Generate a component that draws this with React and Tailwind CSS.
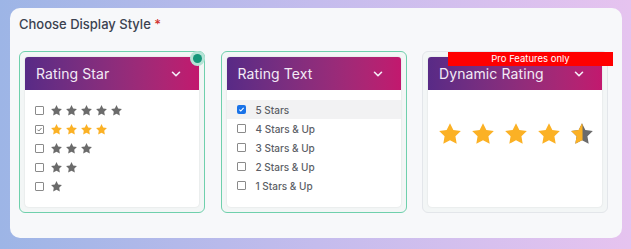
import { ChevronDown } from 'lucide-react'

const STAR = 'M12 2l3.09 6.26L22 9.27l-5 4.87 1.18 6.88L12 17.77l-6.18 3.25L7 14.14 2 9.27l6.91-1.01L12 2z'

function Star({ size = 12, color = '#6b6b6b', half = false, id }) {
  if (half) {
    return (
      <svg width={size} height={size} viewBox="0 0 24 24">
        <defs>
          <clipPath id={id}>
            <rect x="0" y="0" width="12.5" height="24" />
          </clipPath>
        </defs>
        <path d={STAR} fill="#6b6b6b" />
        <path d={STAR} fill="#fbb125" clipPath={`url(#${id})`} />
      </svg>
    )
  }
  return (
    <svg width={size} height={size} viewBox="0 0 24 24">
      <path d={STAR} fill={color} />
    </svg>
  )
}

function Box({ checked, blue }) {
  if (checked && blue) {
    return (
      <span className="w-[9px] h-[9px] rounded-[2px] bg-[#1a73e8] flex items-center justify-center">
        <svg width="7" height="7" viewBox="0 0 10 10">
          <path d="M2 5.2l2 2 4-4.4" stroke="white" strokeWidth="1.6" fill="none" />
        </svg>
      </span>
    )
  }
  return (
    <span className="w-[9px] h-[9px] rounded-[1px] border border-[#8a8a8a] bg-white flex items-center justify-center">
      {checked && (
        <svg width="7" height="7" viewBox="0 0 10 10">
          <path d="M2 5.2l2 2 4-4.4" stroke="#777" strokeWidth="1.4" fill="none" />
        </svg>
      )}
    </span>
  )
}

function Header({ title }) {
  return (
    <div className="h-[33px] rounded-t-[3px] bg-gradient-to-r from-[#582a86] to-[#c2186e] flex items-center justify-between pl-[11px] pr-[16px]">
      <span className="text-[14px] text-[#f3eaf6] leading-none tracking-[0.1px]">{title}</span>
      <ChevronDown size={14} strokeWidth={2.8} color="#f5eef8" />
    </div>
  )
}

function Card({ active, children }) {
  return (
    <div
      className={`relative w-[186px] h-[162px] rounded-[6px] p-[5px] bg-[#f3f6f6] ${
        active ? 'border-[1.5px] border-[#6fd0ac]' : 'border border-[#e3e6ea]'
      }`}
    >
      <div className="h-full rounded-[4px] bg-white shadow-[0_0_2px_rgba(0,0,0,0.12)] flex flex-col">
        {children}
      </div>
    </div>
  )
}

const starRows = [5, 4, 3, 2, 1]
const textRows = ['5 Stars', '4 Stars & Up', '3 Stars & Up', '2 Stars & Up', '1 Stars & Up']

export default function App() {
  return (
    <div
      className="w-[631px] h-[249px] bg-gradient-to-r from-[#9db5e6] via-[#c4bced] to-[#e6c3ef] pt-[8px] pl-[10px]"
      style={{ fontFamily: 'Inter, "Open Sans", sans-serif' }}
    >
      <div className="w-[612px] h-[230px] rounded-[10px] bg-[#f7f8fa] pl-[9px] pt-[6px]">
        <div className="text-[13px] font-medium text-[#3b4250] leading-[20px]">
          Choose Display Style <span className="text-[#d0312d]">*</span>
        </div>

        <div className="flex gap-[15.5px] mt-[17px]">
          {/* Rating Star */}
          <Card active>
            <Header title="Rating Star" />
            <div className="pt-[11px] pl-[10px] flex flex-col">
              {starRows.map((n) => (
                <div key={n} className="h-[19px] flex items-center gap-[6px]">
                  <Box checked={n === 4} />
                  <div className="flex gap-[2px]">
                    {Array.from({ length: n }).map((_, i) => (
                      <Star key={i} size={13} color={n === 4 ? '#fbb125' : '#6b6b6b'} />
                    ))}
                  </div>
                </div>
              ))}
            </div>
            <span className="absolute -top-[1px] -right-[1px] w-[15px] h-[15px] rounded-full bg-[#b5e3d6] flex items-center justify-center">
              <span className="w-[9px] h-[9px] rounded-full bg-[#16967a]" />
            </span>
          </Card>

          {/* Rating Text */}
          <Card active>
            <Header title="Rating Text" />
            <div className="pt-[10px] flex flex-col">
              {textRows.map((t, i) => (
                <div
                  key={t}
                  className={`h-[19px] flex items-center gap-[10px] pl-[10px] ${i === 0 ? 'bg-[#f2f2f3]' : ''}`}
                >
                  <Box checked={i === 0} blue />
                  <span className="text-[10px] font-medium text-[#5b5e66] leading-none">{t}</span>
                </div>
              ))}
            </div>
          </Card>

          {/* Dynamic Rating */}
          <Card>
            <Header title="Dynamic Rating" />
            <div className="flex items-center gap-[7px] pl-[9px] pt-[31px]">
              <Star size={26} color="#fbb125" />
              <Star size={26} color="#fbb125" />
              <Star size={26} color="#fbb125" />
              <Star size={26} color="#fbb125" />
              <Star size={26} half id="halfclip" />
            </div>
            <div className="absolute top-0 left-[25px] w-[165px] h-[14px] bg-[#ff0000] flex items-center justify-center">
              <span className="text-[9.5px] text-white leading-none">Pro Features only</span>
            </div>
          </Card>
        </div>
      </div>
    </div>
  )
}
